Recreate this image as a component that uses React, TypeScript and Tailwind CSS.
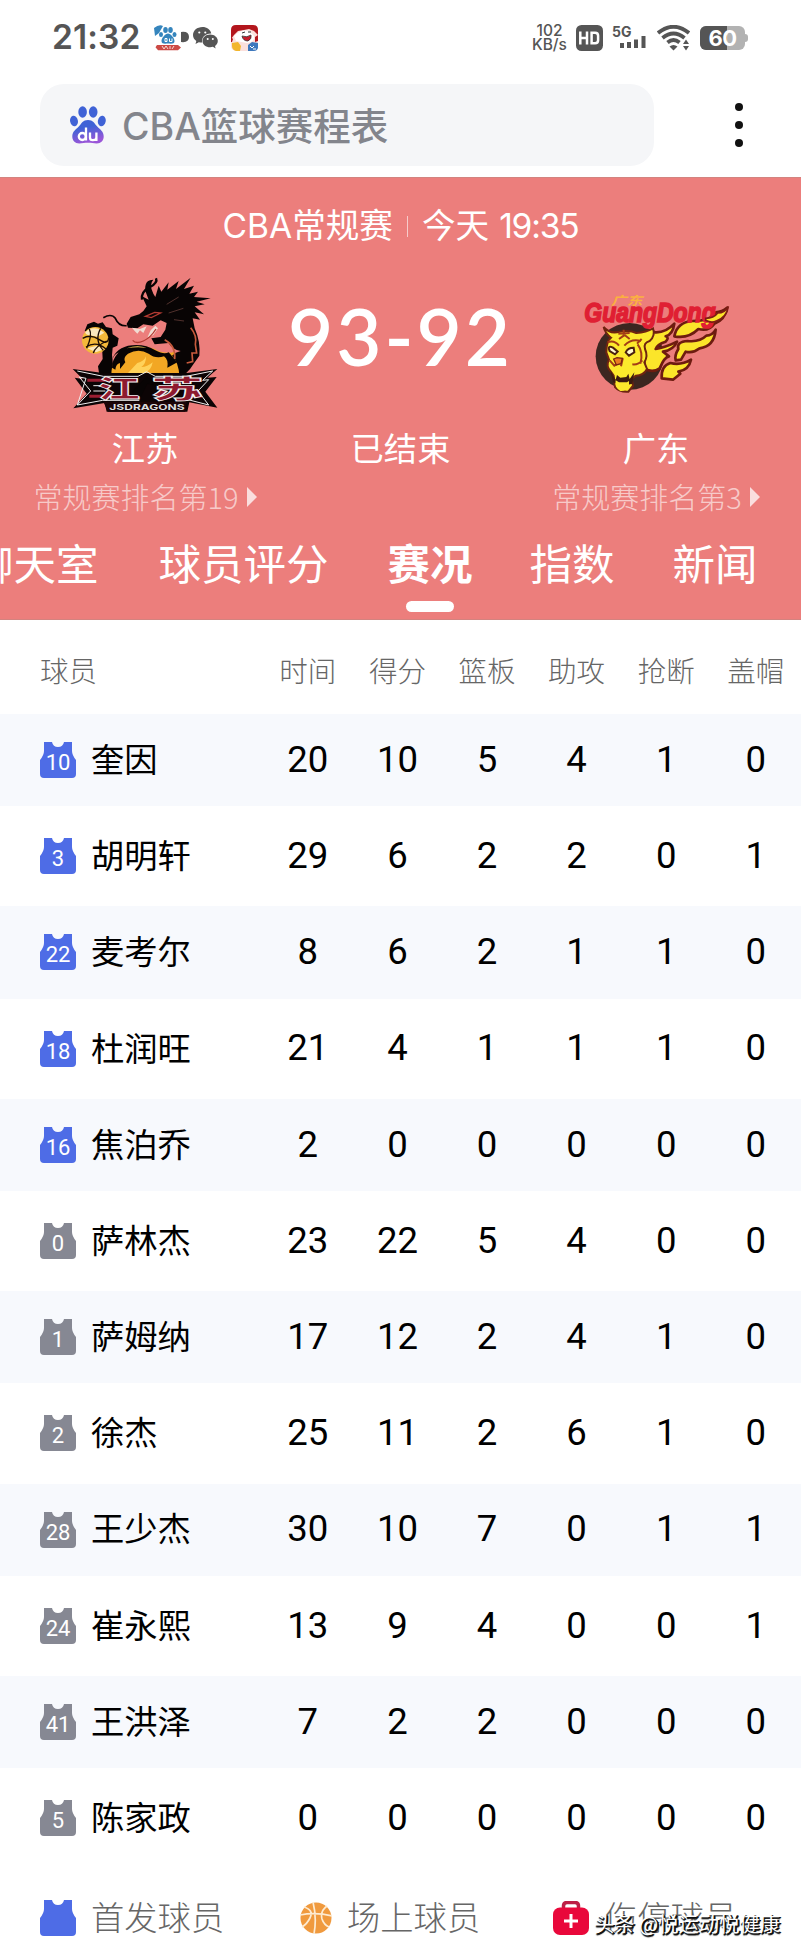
const COLUMNS = ["时间", "得分", "篮板", "助攻", "抢断", "盖帽"];

type Player = {
  no: number;
  name: string;
  starter?: boolean;
  stats: number[];
};

const PLAYERS: Player[] = [
  { no: 10, name: "奎因", starter: true, stats: [20, 10, 5, 4, 1, 0] },
  { no: 3, name: "胡明轩", starter: true, stats: [29, 6, 2, 2, 0, 1] },
  { no: 22, name: "麦考尔", starter: true, stats: [8, 6, 2, 1, 1, 0] },
  { no: 18, name: "杜润旺", starter: true, stats: [21, 4, 1, 1, 1, 0] },
  { no: 16, name: "焦泊乔", starter: true, stats: [2, 0, 0, 0, 0, 0] },
  { no: 0, name: "萨林杰", stats: [23, 22, 5, 4, 0, 0] },
  { no: 1, name: "萨姆纳", stats: [17, 12, 2, 4, 1, 0] },
  { no: 2, name: "徐杰", stats: [25, 11, 2, 6, 1, 0] },
  { no: 28, name: "王少杰", stats: [30, 10, 7, 0, 1, 1] },
  { no: 24, name: "崔永熙", stats: [13, 9, 4, 0, 0, 1] },
  { no: 41, name: "王洪泽", stats: [7, 2, 2, 0, 0, 0] },
  { no: 5, name: "陈家政", stats: [0, 0, 0, 0, 0, 0] },
];

function Paw() {
  return (
    <svg viewBox="0 0 36 38" className="h-[38px] w-[36px]">
      <defs>
        <linearGradient id="paw" x1="0" y1="0" x2="0.3" y2="1">
          <stop offset="0.4" stopColor="#3f62d6" />
          <stop offset="1" stopColor="#9a56d8" />
        </linearGradient>
      </defs>
      <g fill="#3f62d6">
        <ellipse cx="12.6" cy="6" rx="4.3" ry="5.8" />
        <ellipse cx="23.2" cy="6" rx="4.3" ry="5.8" />
        <ellipse cx="4" cy="15" rx="3.9" ry="5.3" transform="rotate(-12 4 15)" />
        <ellipse cx="31.8" cy="15" rx="3.9" ry="5.3" transform="rotate(12 31.8 15)" />
      </g>
      <path
        fill="url(#paw)"
        d="M18 14c-5 0-6.500 3.500-9 6.300C6 23.500 2.300 25.500 2.300 30.500c0 4 2.700 7 7 7 3 0 5.500-.7 8.700-.7s5.700.7 8.700.7c4.300 0 7-3 7-7 0-5-3.700-7-6.700-10.200C24.500 17.500 23 14 18 14z"
      />
      <g fill="none" stroke="#fff" strokeWidth="2.300">
        <circle cx="12.300" cy="30.500" r="3.500" />
        <path d="M16 21.500v13M20 26.500v5c0 2 1 2.700 2.700 2.700s3.700-.7 3.700-2.700v-5M26.400 26.500v8.500" />
      </g>
    </svg>
  );
}

function StatusBar() {
  return (
    <div className="flex h-[75px] shrink-0 items-center justify-between pl-[52px] pr-[53px] text-[#555]">
      <div className="flex items-center">
        <span className="w-[102px] font-[Inter,sans-serif] text-[33.500px] leading-none font-semibold tracking-[0.1px]">
          21:32
        </span>
        <svg viewBox="0 0 36 26" className="h-[26px] w-[36px]">
          <g fill="#3585bd">
            <path d="M0 3q5-4 9-2L5 8l-4 3z" />
            <ellipse cx="11.500" cy="5" rx="2.300" ry="3" />
            <ellipse cx="16.500" cy="5" rx="2.300" ry="3" />
            <ellipse cx="7" cy="9.500" rx="2" ry="2.600" />
            <ellipse cx="20.500" cy="9.500" rx="2" ry="2.600" />
            <path d="M14 8.500c-2.500 0-6.500 4.500-6.500 7.500 0 3.500 4 2.600 6.500 2.600s6.500.9 6.500-2.600c0-3-4-7.500-6.500-7.500z" />
          </g>
          <path d="M11 13.500h2v3h-2zM15.500 13.500v3h2.500v-3" fill="none" stroke="#fff" strokeWidth="1" />
          <path d="M3 20h21l3 2.500-3 2.800H4l-2.500-3z" fill="#cc4a45" />
          <path d="M8 21l2 3 2-3 2 3M16 21v3M18 24l2-3" fill="none" stroke="#f7d9d4" strokeWidth="1" />
          <path d="M27 7q8-1 8 5t-8 5z" fill="#555" />
        </svg>
        <svg viewBox="0 0 25 22" className="ml-[3px] h-[22px] w-[25px]">
          <path
            fill="#555"
            d="M9.500 0C4 0 0 3.600 0 8c0 2.500 1.300 4.600 3.300 6l-.8 3 3.300-1.800c1 .3 2.200.4 3.400.4-1.200-4.600 3-9.300 9.100-9.100C17.400 2.600 13.800 0 9.500 0z"
          />
          <path
            fill="#555"
            d="M17.200 7.500c-4.500 0-7.700 2.900-7.700 6.400s3.200 6.300 7.700 6.300c1 0 1.900-.1 2.700-.4l2.700 1.700-.6-2.600c1.700-1.200 2.800-3 2.800-5 0-3.500-3.400-6.400-7.600-6.400z"
          />
          <g fill="#fff">
            <circle cx="6.300" cy="5.500" r="1.100" />
            <circle cx="12.300" cy="5.500" r="1.100" />
            <circle cx="14.700" cy="12" r="1" />
            <circle cx="19.800" cy="12" r="1" />
          </g>
        </svg>
        <svg viewBox="0 0 27 26" className="ml-[13px] h-[26px] w-[27px]">
          <rect width="27" height="26" rx="5" fill="#fbe0dc" />
          <path d="M0 14V5q0-5 5-5h17q5 0 5 5v5l-4-4-5-2-5 1-6 1-4 4z" fill="#b3161d" />
          <path d="M3 11q7-7 15-5l5 5q1 6-7 7L5 16z" fill="#fff" />
          <path d="M11 11q5 2 9-1 1 4-3 6-5 0-6-5z" fill="#c81d2b" stroke="#333" strokeWidth=".8" />
          <path d="M11 8l3-1M17 7l3 0" stroke="#333" />
          <path d="M1 18l6-1 3 4-1 5H5q-4-1-4-5z" fill="#f2b62d" />
          <path d="M17 20l4-3 6 1v5q-1 3-4 3h-6z" fill="#3d78bd" />
          <path d="M0 12l2 2-1 3H0zM24 12l3-2v6l-3 1z" fill="#b3161d" />
          <path d="M19 21l2 2 2-2M22 24h3" stroke="#fff" fill="none" />
        </svg>
      </div>
      <div className="flex items-center">
        <div className="w-[45px] text-center font-[Inter,sans-serif] text-[15.500px] leading-[14px] font-medium">
          <div>102</div>
          <div>KB/s</div>
        </div>
        <svg viewBox="0 0 27 26" className="ml-[4px] h-[26px] w-[27px]">
          <rect width="27" height="26" rx="5.500" fill="#555" />
          <path d="M4.300 6.500v13M11 6.500v13M4.300 13H11M15.600 7.700v10.600h3.500q3 0 3-3v-4.600q0-3-3-3z" fill="none" stroke="#fff" strokeWidth="2.500" />
        </svg>
        <div className="ml-[9px] flex h-[26px] w-[35px] flex-col">
          <span className="h-[11px] font-[Inter,sans-serif] text-[14px] leading-[14px] font-bold">5G</span>
          <svg viewBox="0 0 35 15" className="h-[15px] w-[35px]">
            <path d="M8 7h4v5H8zM15 6h4v6h-4zM22 3.500h4V12h-4zM29.500 0h4v12h-4z" fill="#555" />
          </svg>
        </div>
        <svg viewBox="0 0 33 26" className="ml-[10px] h-[26px] w-[33px]">
          <g fill="none" stroke="#555" strokeWidth="3.800">
            <path d="M1 8Q16.500-4.500 32 8" />
            <path d="M5.500 13Q16.500 4 27.500 13" />
            <path d="M10.500 17.500q6-5 12 0" />
          </g>
          <path d="M12.500 21.500q4-3 8 0l-4 4z" fill="#555" />
          <path d="M26 19l3-4.500 3 4.500zM26 21h6l-3 4.500z" fill="#555" />
        </svg>
        <div className="ml-[10px] flex items-center">
          <div className="relative flex h-[24px] w-[45px] items-center justify-center overflow-hidden rounded-[6px] bg-[#b2b2b2]">
            <div className="absolute inset-y-0 left-0 w-[27px] bg-[#555]" />
            <span className="relative font-[Inter,sans-serif] text-[22px] leading-none font-bold tracking-[-0.5px] text-white">
              60
            </span>
          </div>
          <div className="h-[8px] w-[3px] rounded-r bg-[#b2b2b2]" />
        </div>
      </div>
    </div>
  );
}

function SearchBar() {
  return (
    <div className="mt-[9px] mb-[11px] flex h-[82px] shrink-0 items-center justify-between pr-[58px] pl-[40px]">
      <div className="flex h-[82px] w-[614px] items-center rounded-[24px] bg-[#f5f6f8] pl-[30px] text-[#83858c]">
        <Paw />
        <span className='ml-[16px] pt-[3px] font-[Inter,"Noto_Sans_CJK_SC",sans-serif] text-[37.500px] leading-none font-medium whitespace-nowrap'>
          CBA篮球赛程表
        </span>
      </div>
      <div className="flex flex-col gap-[10px]">
        <div className="size-2 rounded-full bg-[#111]" />
        <div className="size-2 rounded-full bg-[#111]" />
        <div className="size-2 rounded-full bg-[#111]" />
      </div>
    </div>
  );
}

function DragonsLogo() {
  return (
    <svg viewBox="0 39 570 471" className="h-[157px] w-[190px] shrink-0">
      {/* claw and ball */}
      <path d="M104 210l8-20 20-8 12 6 14-4 10 14 18 4 2 18 18 12-4 22-14 6-2 22 6 60-44 0-4-26 14-22-2-40-20-38z" fill="#080404" />
      <circle cx="136" cy="238" r="40" fill="#f4b93a" />
      <path d="M105 215q14-18 40-12l18 12-20 12-32-6zM112 262l28-8 24 10-26 10z" fill="#fbe8bd" />
      <path d="M98 232q24-14 50 4t28-6M118 204q10 18-8 58M152 202q-20 36 8 66M108 258q30-20 60 6M130 276q6-20 40-36" fill="none" stroke="#1a0c04" strokeWidth="4" />
      {/* belly */}
      <path d="M184 344q0-62 44-84 42-14 86 4 34 18 58 8l30 72z" fill="#f2a724" />
      <path
        d="M184 306q6-40 50-52 48-8 82 14 26 14 40 6l26 30-30 16q4-24-10-34-26 8-46-8-30-18-62 0-16 12-8 26l-16 20 0-18q-12 2-14 20l-10-6q0-24 20-46-18 8-22 32z"
        fill="#080404"
      />
      <path d="M230 262q30-12 60-2-34-4-60 2zM262 306q20-4 26-20 0 24-14 32 18 0 34-14-4 24-24 32h-50z" fill="#ffd25a" />
      {/* neck, head and mane */}
      <path
        d="M234 200l-4-12 12-20 26-8 12-10 10-14-14-30 20 10-10-26q-4-34 24-34-14 14 0 42l6 10 10-34 8 18 22-28-4 22 34-26-8 24 44-34-20 34 30-10-14 24 26-6-12 16 50 4-42 10 24 8-30 6 28 24-28-6 16 22-22-4 6 30q18 40 14 82l-18 26q-20 34-42 34-2-40-22-60 10-10 26-14-26-4-36-24l-42 4-10-18 28-4 14-22 4-20-18-8-24 16-28-4-18 12z"
        fill="#080404"
      />
      <path d="M276 116q-4-24 24-38 24-12 18-26" fill="none" stroke="#080404" strokeWidth="7" />
      <path d="M230 194q-24 2-34-22-12-16-36-2" fill="none" stroke="#080404" strokeWidth="5" />
      <path d="M246 200l24 4 20-8-10 20-10-8-8 10-8-8zM302 208l14-14 8 8-14 20-18 8z" fill="#f0dcd2" />
      <path d="M248 238q10 12 32 2t38-36M286 166l28-12 18 2-28 14z" fill="none" stroke="#b33a32" strokeWidth="4" />
      <path d="M344 236q34 18 30 58M422 200q20 24 14 50l4 26-14 0 2 26-18 4" fill="none" stroke="#c65a3c" strokeWidth="5" />
      <path d="M350 130l36-22M356 156l44-14M372 176l30 4" stroke="#50302c" strokeWidth="3" />
      {/* wordmark banner */}
      <path d="M68 324l92 12h250l92-12-30 26 28-2-34 44 36 48-84-16-6 28H170l-6-26-94 16 40-44-36-48 24 4z" fill="#0c0405" />
      <path
        d="M82 330l78 16h104l26-14 26 14h92l80-16-30 28 18-2-32 34 32 42-62-16M82 432l76-14h110M82 432l40-42-34-42 20 4z"
        fill="none"
        stroke="#eee"
        strokeWidth="3"
      />
      <path d="M112 358h54M118 406h48M420 358h36M424 406h32" stroke="#9c1e32" strokeWidth="9" />
      <path d="M130 374h36M130 390h36" stroke="#eee" strokeWidth="3" />
      <g className='font-["Noto_Sans_CJK_SC",sans-serif] font-black' fill="#8e1a2e" stroke="#f2f2f2" strokeWidth="2.500">
        <text x="144" y="410" fontSize="74" textLength="126" lengthAdjust="spacingAndGlyphs">江</text>
        <text x="304" y="410" fontSize="74" textLength="156" lengthAdjust="spacingAndGlyphs">苏</text>
      </g>
      <path d="M246 392l44-46 38 30-36-8-20 40z" fill="#080404" />
      <path d="M160 422h250l-4 30H174z" fill="#1b0507" />
      <text x="178" y="446" fontSize="24" textLength="226" lengthAdjust="spacingAndGlyphs" fill="#ddd" className="font-[Inter,sans-serif] font-bold">
        JSDRAGONS
      </text>
    </svg>
  );
}

function TigersLogo() {
  return (
    <svg viewBox="0 -21 570 471" className="h-[157px] w-[190px] shrink-0">
      <ellipse cx="206" cy="226" rx="102" ry="100" fill="#3c2620" />
      {/* flames */}
      <g fill="#fbe52a" stroke="#6e1c10" strokeWidth="8" strokeLinejoin="round">
        <path d="M340 166q8-42 54-46 56 0 70-26 20-2 34-14-6 36-38 48-16 24-48 16-30 30-72 22z" />
        <path d="M344 238q-4-14 8-34-6-22 28-24 36 4 56-16 18 0 28-18-4 50-48 56-20 16-42 10l-14 24z" />
        <path d="M252 264q-6-60-2-96 10-28 32-14 32 2 58-26-4 32-26 38 12 4 0 16-26 8-30 22 28-4 64-22-10 24-42 30l18 14q-14 2-28 36-20 14-44 2z" />
        <path d="M302 292q-2-38 26-46 32 8 62-10-6 30-38 36l6 6-22 18z" />
      </g>
      {/* head */}
      <path
        d="M128 138q18 22 48 14 30-6 50 4 30-2 50-14 8 22-10 38-20 6-14 24 10 22-2 40l8 20q-10 20-34 20l-12 10 4 20-14 18q-26 2-40-14l-4-34-10-14q-14-14-4-34l-8-22q0-34 14-44-18-14-22-32z"
        fill="#fce92c"
        stroke="#6e2410"
        strokeWidth="6"
      />
      <path d="M148 268l16 28 4-14 10 8 18-2 6-10 4 16 14-20-6 34-16 4-26-2-16-6z" fill="#3a1a10" />
      <path d="M164 298l10 6h24l6-4v16q-10 16-26 14-18-10-14-32z" fill="#fce92c" />
      <path d="M146 210q-8-18 10-10l14 12-8 8zM194 214q6-14 24-14l2 14-16 10z" fill="#fffbd0" stroke="#4a2010" strokeWidth="6" />
      <path
        d="M140 184q20-8 34 10M190 194q20-22 50-14M188 146v18l-14 10M188 160l18 14M172 158l34-2M146 238l14 16 24-16-4 18M230 190q18 24 8 58M214 250q18 2 30-12M242 174l-14 14"
        fill="none"
        stroke="#a33c16"
        strokeWidth="6"
      />
      <path d="M158 234l10-4 16 2-4 16-14 4z" fill="#e97b22" stroke="#7b2410" strokeWidth="4" />
      <text x="70" y="123" fontSize="82" textLength="394" lengthAdjust="spacingAndGlyphs" fill="#e01f33" stroke="#e01f33" strokeWidth="5" className='font-["Liberation_Sans",sans-serif] font-bold italic'>
        GuangDong
      </text>
      <path d="M434 112q24 0 36-16 22 0 32-20-4 32-36 44-14 8-32-2z" fill="#fbe52a" stroke="#7e1c14" strokeWidth="5" />
      <text x="150" y="71" fontSize="36" textLength="94" lengthAdjust="spacingAndGlyphs" fill="#fbb040" className='font-["Noto_Sans_CJK_SC",sans-serif] font-bold italic'>
        广东
      </text>
    </svg>
  );
}

function Rank({ label }: { label: string }) {
  return (
    <div className="flex h-[64px] items-center gap-[8px] whitespace-nowrap text-white/60">
      <span className="pb-[3px] text-[29px] leading-none font-light">{label}</span>
      <svg viewBox="0 0 10 20" className="mb-[1px] h-[20px] w-[10px]">
        <path d="M0 0l10 10L0 20z" fill="#fff" fillOpacity=".75" />
      </svg>
    </div>
  );
}

function ScoreHeader() {
  return (
    <header className='h-[443px] shrink-0 overflow-hidden border-y border-[#d3837f] bg-[#ec7e7c] font-["Noto_Sans_CJK_SC",sans-serif] text-white'>
      <div className='flex h-[96px] items-center justify-center font-[Inter,"Noto_Sans_CJK_SC",sans-serif] text-[33.600px] leading-none whitespace-nowrap'>
        <span>CBA常规赛</span>
        <div className="mx-[14px] h-[21px] w-px bg-white/60" />
        <span>今天</span>
        <span className="ml-[10px] tracking-[-1.200px]">19:35</span>
      </div>
      <div className="flex h-[255px]">
        <div className="flex w-[290px] flex-col items-center">
          <DragonsLogo />
          <div className="h-[36px] text-[33.300px] leading-[32px]">江苏</div>
          <Rank label="常规赛排名第19" />
        </div>
        <div className="flex w-[221px] flex-col items-center">
          <div className="h-[157px] font-[Lato,sans-serif] text-[78px] leading-[124px] font-semibold tracking-[3px] whitespace-nowrap">
            93-92
          </div>
          <div className="h-[36px] text-[33.300px] leading-[32px]">已结束</div>
        </div>
        <div className="flex w-[290px] flex-col items-center">
          <TigersLogo />
          <div className="h-[36px] text-[33.300px] leading-[32px]">广东</div>
          <Rank label="常规赛排名第3" />
        </div>
      </div>
      <nav className="-ml-[29px] flex text-[42.500px] leading-[66px] whitespace-nowrap">
        <span className="mr-[60px]">聊天室</span>
        <span className="mr-[59px]">球员评分</span>
        <span className="mr-[57px] flex flex-col items-center font-bold">
          赛况
          <span className="mt-[6px] h-[11px] w-[48px] rounded-full bg-white" />
        </span>
        <span className="mr-[58px]">指数</span>
        <span>新闻</span>
      </nav>
    </header>
  );
}

function Jersey({ no, starter }: { no?: number; starter?: boolean }) {
  return (
    <div className="relative size-[36px] shrink-0">
      <svg viewBox="0 0 36 36" className="size-[36px]">
        <path
          d="M4 0h8q1 5 6 5t6-5h8v9q0 4 4 9v14q0 4-4 4H4q-4 0-4-4V18q4-5 4-9z"
          fill={starter ? "#4e6ce6" : "#868893"}
        />
      </svg>
      {no !== undefined && (
        <span className="absolute inset-0 top-[5px] text-center font-[Roboto,sans-serif] text-[22px] leading-[32px] text-white">
          {no}
        </span>
      )}
    </div>
  );
}

function StatsTable() {
  return (
    <section>
      <div className='grid h-[92px] grid-cols-[223px_repeat(6,89.600px)] items-center pb-[2px] pl-[40px] font-["Noto_Sans_CJK_SC",sans-serif] text-[28.500px] leading-none font-light text-[#666]'>
        <span className="pt-[10px]">球员</span>
        {COLUMNS.map((label) => (
          <span key={label} className="pt-[10px] text-center">
            {label}
          </span>
        ))}
      </div>
      {PLAYERS.map((player, i) => (
        <div key={player.name} className="h-[96.200px] py-[2px]">
          <div
            className={`grid h-full grid-cols-[223px_repeat(6,89.600px)] items-center pl-[40px] ${
              i % 2 === 0 ? "bg-[#f7f9fd]" : "bg-white"
            }`}
          >
            <div className="flex items-center gap-[15px]">
              <Jersey no={player.no} starter={player.starter} />
              <span className='pb-[5px] font-["Noto_Sans_CJK_SC",sans-serif] text-[33.300px] leading-none text-black'>
                {player.name}
              </span>
            </div>
            {player.stats.map((value, col) => (
              <span key={col} className="text-center font-[Roboto,sans-serif] text-[36.500px] leading-none text-black">
                {value}
              </span>
            ))}
          </div>
        </div>
      ))}
    </section>
  );
}

function Legend() {
  return (
    <footer className='relative flex h-[86px] items-center pt-[17px] pl-[40px] font-["Noto_Sans_CJK_SC",sans-serif] text-[33.300px] leading-none font-light whitespace-nowrap text-[#666]'>
      <Jersey starter />
      <span className="ml-[15px] w-[209px] pb-[4px]">首发球员</span>
      <svg viewBox="0 0 32 32" className="size-[32px]">
        <circle cx="16" cy="16" r="15.500" fill="#f09a3e" />
        <path d="M13 0q4 16 1 32M0 13q16-3 32 1M4 5q10 3 6 11-3 6-8 9M27 4q-7 5-5 13 2 6 7 8" fill="none" stroke="#fdebd2" strokeWidth="1.700" />
      </svg>
      <span className="ml-[15px] w-[206px] pb-[4px]">场上球员</span>
      <svg viewBox="0 0 36 34" className="h-[34px] w-[36px]">
        <path d="M10.500 9V5q0-3.500 3.500-3.500h8q3.500 0 3.500 3.500v4" fill="none" stroke="#bd1f45" strokeWidth="3.500" />
        <rect y="6.500" width="36" height="27.500" rx="7" fill="#e9083b" />
        <path d="M18 13v14M11 20h14" stroke="#fff" strokeWidth="3" />
      </svg>
      <span className="ml-[15px] pb-[4px]">伤停球员</span>
      {/* watermark over the legend */}
      <span className="absolute top-[47px] left-[594px] text-[20.300px] font-normal text-white [text-shadow:1px_1px_0_#111,2px_1px_0_#111,1px_2px_1px_#111]">
        头条 @悦运动悦健康
      </span>
    </footer>
  );
}

export default function App() {
  return (
    <div className="flex h-[1952px] w-[801px] flex-col overflow-hidden bg-white">
      <StatusBar />
      <SearchBar />
      <ScoreHeader />
      <StatsTable />
      <Legend />
    </div>
  );
}
